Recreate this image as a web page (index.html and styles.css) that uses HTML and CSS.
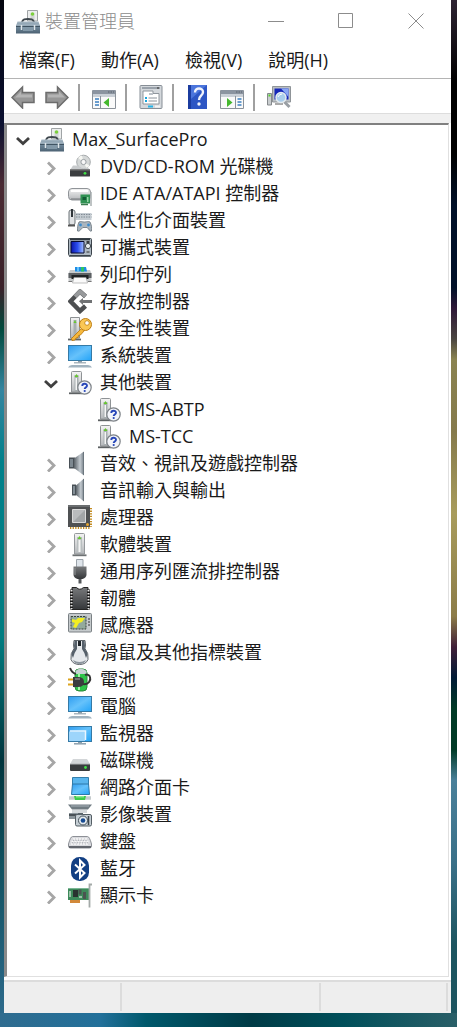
FILE: index.html
```html
<!DOCTYPE html>
<html lang="zh-Hant">
<head>
    <meta charset="UTF-8">
    <meta name="viewport" content="width=device-width, initial-scale=1.0">
    <title>裝置管理員</title>
    <link rel="stylesheet" href="styles.css">
</head>
<body>
    <!-- Icon definitions -->
    <svg class="defs" aria-hidden="true">
        <defs>
            <linearGradient id="blue" x1="0" y1="0" x2="1" y2="1">
                <stop offset="0" stop-color="#2f9df0"/><stop offset=".5" stop-color="#66c2fb"/><stop offset="1" stop-color="#22a3f8"/>
            </linearGradient>
            <linearGradient id="silver" x1="0" y1="0" x2="0" y2="1">
                <stop offset="0" stop-color="#f4f4f4"/><stop offset="1" stop-color="#b4b7ba"/>
            </linearGradient>
            <linearGradient id="steel" x1="0" y1="0" x2="0" y2="1">
                <stop offset="0" stop-color="#a9bac6"/><stop offset=".45" stop-color="#70889a"/><stop offset="1" stop-color="#4c6273"/>
            </linearGradient>
            <linearGradient id="cone" x1="0" y1="0" x2="1" y2="0">
                <stop offset="0" stop-color="#5a6268"/><stop offset=".6" stop-color="#c3cad0"/><stop offset="1" stop-color="#747e86"/>
            </linearGradient>
            <linearGradient id="dark" x1="0" y1="0" x2="0" y2="1">
                <stop offset="0" stop-color="#77797b"/><stop offset="1" stop-color="#35373a"/>
            </linearGradient>
            <linearGradient id="lcd" x1="0" y1="0" x2="1" y2="0">
                <stop offset="0" stop-color="#0a14a8"/><stop offset=".5" stop-color="#2d50f0"/><stop offset="1" stop-color="#a8c4ff"/>
            </linearGradient>
        </defs>

        <symbol id="i-toolbox" viewBox="0 0 24 25">
            <path d="M11.500 12V1.500h10V12z" fill="#eceeee" stroke="#a0a4a6"/>
            <path d="M14.500 4.500h4v7h-4z" fill="#cfd4d2"/><circle cx="16.500" cy="5" r="1.800" fill="#7bd03c"/>
            <path d="M6 13c1-3 3-3 6-3s5 0 6 3" fill="none" stroke="#3e474d" stroke-width="2"/>
            <path d="M1.500 12.500h21L24 17v7.500H0V17z" fill="url(#steel)"/>
            <path d="M0 17.500h24" stroke="#3f5362"/><path d="M1 16h22" stroke="#b9c8d3" stroke-width=".8"/>
            <path d="M5.500 16v5M18.500 16v5" stroke="#dfe6ea" stroke-width="1.500"/><path d="M7 18h10v4H7z" fill="#8298a8"/>
        </symbol>
        <symbol id="i-dvd" viewBox="0 0 24 25">
            <circle cx="15.500" cy="8" r="6.800" fill="#d5d8d8" stroke="#a6aaac"/>
            <path d="M15.500 8L10 4a6.500 6.500 0 0 1 4-2.500zM15.500 8l6 3.500a6.500 6.500 0 0 1-3 2.700z" fill="#f5f6f2"/>
            <circle cx="15.500" cy="8" r="2.600" fill="#f7f7f7" stroke="#9ba0a4"/>
            <path d="M5 11.500h5c3 4 8 3 9.500 1.500l2.500 3H2z" fill="#c8cbcd"/>
            <path d="M2 15.500h20v6.500q0 .5-1 .5H3q-1 0-1-.5z" fill="#3b3e40"/><path d="M2 16h20" stroke="#777"/><circle cx="17" cy="19.300" r="1.400" fill="#3ee044"/>
        </symbol>
        <symbol id="i-ide" viewBox="0 0 24 25">
            <rect x=".5" y="7.500" width="22" height="11.500" rx="3.500" fill="url(#silver)" stroke="#909498"/>
            <path d="M3 10h17" stroke="#fff" stroke-width="2"/><path d="M3 18h10" stroke="#74787c"/>
            <path d="M12.500 13.500h9.500v9h-9.500z" fill="#2f9152"/><path d="M23 11v14" stroke="#a8afb0" stroke-width="1.500"/>
            <path d="M14.500 16h3.500v3h-3.500z" fill="#145c36"/><path d="M13 23.500h7" stroke="#3b7d4f" stroke-width="1.500"/><path d="M19 16h1.500v5H19z" fill="#93d4a4"/>
        </symbol>
        <symbol id="i-hid" viewBox="0 0 24 25">
            <rect x="1" y="2" width="6" height="15" rx="2" fill="#e0e2e4" stroke="#6b7277"/>
            <path d="M4 1v8" stroke="#30363a" stroke-width="2"/><path d="M0 17.500h7" stroke="#555" stroke-width="2"/>
            <path d="M8 5h15.500v7H8z" fill="#c5ccd2"/><path d="M8 6.500h15.500M8 9h15.500" stroke="#818b94" stroke-width="1.200" stroke-dasharray="1.500 1"/>
            <path d="M11 14c2-1 3 0 5.500 0s3.500-1 5.500 0c1.500 3 2 6 1.500 9-2 1-3-3-4.500-3.500h-4C13.500 20 12 24 9.500 23c0-3 0-6 1.500-9z" fill="#aab5be" stroke="#66717a" stroke-width=".8"/>
            <circle cx="12.500" cy="17" r="1.400" fill="#3a8cd0"/><circle cx="20.500" cy="17" r="1.400" fill="#3a8cd0"/>
        </symbol>
        <symbol id="i-portable" viewBox="0 0 24 25">
            <rect x=".500" y="3.500" width="23" height="17" rx="1" fill="#aeb9c2" stroke="#3c444b"/>
            <path d="M2 4.500h20" stroke="#303840" stroke-width="1.500"/>
            <path d="M3 6.500h13v11.500H3z" fill="url(#lcd)" stroke="#070b30"/>
            <circle cx="20" cy="11" r="2.600" fill="#e8edf0" stroke="#3c444b"/><path d="M18.500 7h3" stroke="#111" stroke-width="1.500"/><path d="M18.500 17h3" stroke="#333"/>
            <path d="M1 21.500h22" stroke="#6b747b"/>
        </symbol>
        <symbol id="i-printer" viewBox="0 0 24 25">
            <path d="M2 8h20l1.500 3.500V20H.5v-8.500z" fill="#c7cacc"/><path d="M7 9.500V5h11l1 4.500z" fill="#1e8ce6"/><path d="M13 5h3v4.500h-3z" fill="#2fc463"/><path d="M9 5h2v4.500H9z" fill="#66c2f8"/>
            <path d="M.5 11h23v5H.5z" fill="#5d6164"/>
            <path d="M3.500 17v-4h17v4z" fill="#202325"/><path d="M6 15.500h12l1.500 5.500h-15z" fill="#fafafa" stroke="#999" stroke-width=".6"/>
            <path d="M.5 19.500h3.500M20 19.500h3.500" stroke="#777"/>
        </symbol>
        <symbol id="i-storage" viewBox="0 0 24 25">
            <path d="M17.500 7.500L12 2.500 2.500 12.300 12 22l5.500-5" fill="none" stroke="#4d4f51" stroke-width="4.500"/>
            <path d="M17.500 7.500L12 2.500 7 7.700" fill="none" stroke="#97999b" stroke-width="4"/>
            <path d="M11 12.300l4-3.300v2h9v3h-9v2z" fill="#707274"/>
        </symbol>
        <symbol id="i-tower" viewBox="0 0 24 25">
            <path d="M6.500 2.500q0-1 1-1h8q1 0 1 1V22h-10z" fill="url(#silver)" stroke="#94989b"/>
            <path d="M9 5h5v15H9z" fill="#b9bfc0"/><path d="M10.500 8h2v12h-2z" fill="#f5f5f5"/><path d="M9.500 7l2-3 2 3z" fill="#66c82c"/>
            <path d="M4.500 23.300h14" stroke="#6d7173" stroke-width="1.800"/>
        </symbol>
        <symbol id="i-security" viewBox="0 0 24 25">
            <path d="M2.500 1.500h9V22h-9z" fill="url(#silver)" stroke="#8e9295"/><path d="M5.500 4h3v16h-3z" fill="#a7aeb0"/><path d="M5.500 7L7 4l1.500 3z" fill="#66c82c"/>
            <path d="M0 23.500h13" stroke="#606466" stroke-width="1.800"/>
            <path d="M14 12L3.500 22.500l.5 2 3-.5 1-2 2-.5.5-2 2-.5 4-4.500z" fill="#f6b83d" stroke="#b97408" stroke-width=".8"/>
            <circle cx="17.500" cy="8.500" r="6" fill="#fac755" stroke="#bd7c12"/><circle cx="19" cy="7" r="2.300" fill="#fff" stroke="#bd7c12" stroke-width=".8"/>
        </symbol>
        <symbol id="i-pc" viewBox="0 0 24 25">
            <rect x=".5" y="2.500" width="23" height="15" fill="url(#blue)" stroke="#357aa6"/>
            <path d="M10 18h4v1.500h-4z" fill="#8c9da9"/><path d="M6 19.800h12" stroke="#96a5af" stroke-width="1.200"/>
            <path d="M0 24.500q1-2.500 4-2.500h16q3 0 4 2.500z" fill="#a2b3bf"/>
        </symbol>
        <symbol id="i-unknown" viewBox="0 0 24 25">
            <path d="M3.500 2.500q0-1 1-1h8q1 0 1 1V22h-10z" fill="url(#silver)" stroke="#8e9295"/>
            <path d="M6.500 5h4v16h-4z" fill="#a7aeb0"/><path d="M7.500 8H9v12H7.500z" fill="#f5f5f5"/><path d="M6.500 7l2-3 2 3z" fill="#66c82c"/>
            <path d="M1 23.300h13" stroke="#5d6163" stroke-width="1.800"/>
            <circle cx="16.500" cy="17.500" r="6.700" fill="#f2f4f9" stroke="#7d8287" stroke-width="1.200"/>
            <path d="M14.300 16c0-3 4.700-3 4.700-.3 0 1.800-2.300 1.500-2.300 3.300" fill="none" stroke="#2746b8" stroke-width="1.900"/><circle cx="16.700" cy="21" r="1.100" fill="#2746b8"/>
        </symbol>
        <symbol id="i-sound" viewBox="0 0 24 25">
            <path d="M1 6.500h6v11H1z" fill="#485056"/><path d="M2 8h3v8H2z" fill="#7d8890"/>
            <path d="M6 7.500L16 .5v24L6 17z" fill="url(#cone)"/><path d="M15.500 1v23" stroke="#6b767e"/>
        </symbol>
        <symbol id="i-audio" viewBox="0 0 24 25">
            <path d="M4 6.500h4v11H4z" fill="#485056"/><path d="M5 8h2v8H5z" fill="#828d95"/>
            <path d="M8 7.500L16 .5v23L8 17z" fill="url(#cone)"/><path d="M15.500 1v22" stroke="#6b767e"/>
        </symbol>
        <symbol id="i-cpu" viewBox="0 0 24 25">
            <path d="M2 23h20M23 3v19" stroke="#c28b20" stroke-width="2" stroke-dasharray="1.300 1.300"/>
            <path d="M0 0h22v22H0z" fill="#4f5153"/><path d="M0 0h22v2H0z" fill="#6b6e70"/>
            <path d="M4.500 4.500h13v13h-13z" fill="#b9bbbd" stroke="#dadada"/><path d="M5 17L17 5v12z" fill="#a2a5a7"/><circle cx="19.500" cy="19.500" r="1.500" fill="#e9a52c"/>
        </symbol>
        <symbol id="i-usb" viewBox="0 0 24 25">
            <path d="M8.500.5h6.500v8H8.500z" fill="#dfe5eb" stroke="#9ba3aa"/>
            <path d="M5.500 7.500h13v8q0 3-4 4.500h-5q-4-1.500-4-4.500z" fill="url(#dark)"/><path d="M10.500 20h3v4.500h-3z" fill="#55585b"/>
            <path d="M7 9v7" stroke="#909396"/>
        </symbol>
        <symbol id="i-firmware" viewBox="0 0 24 25">
            <path d="M4 1.500h4.500q3 3.500 7 0H20v22H4z" fill="url(#dark)" stroke="#252525"/>
            <path d="M3.500 3.500v20M20.500 3.500v20" stroke="#1a1a1a" stroke-width="3"/>
            <path d="M3.500 4v19M20.500 4v19" stroke="#e6e6e6" stroke-width="2" stroke-dasharray="1.500 1.500"/>
        </symbol>
        <symbol id="i-sensor" viewBox="0 0 24 25">
            <rect x=".500" y=".500" width="23" height="18.500" rx="1" fill="#c5cacc" stroke="#7a8084"/>
            <path d="M3 3.500h15v12.500H3z" fill="#93aa9c" stroke="#39433e" stroke-dasharray="2 1"/>
            <path d="M4 6l4 1 2-2h7l-3 4-3 1-3 5-3-1 2-4-3-1z" fill="#f3ee20"/><path d="M20 6h2M20 9h2M20 12h2" stroke="#333"/>
        </symbol>
        <symbol id="i-mouse" viewBox="0 0 24 25">
            <path d="M6 .5h11q1 5 0 8 4 5 3 11-2 5-8.500 5T3 19.500q-1-6 3-11-1-3 0-8z" fill="#e6e9ec" stroke="#60666b"/>
            <path d="M6.500 1h2.500v8q-3 4-4 9-2-3-1-6 3-3 2-6zM16.500 1H14v8q3 4 4 9 2-3 1-6-3-3-2-6z" fill="#56606a"/>
            <path d="M10 1h3v5h-3z" fill="#20252a"/><path d="M5 20q6.500 4 13 0-1.500 4-6.500 4T5 20z" fill="#8c959d"/>
        </symbol>
        <symbol id="i-battery" viewBox="0 0 24 25">
            <rect x="7" y="2" width="12" height="22" rx="4" fill="#2fc44a" stroke="#2a8a3a"/><path d="M7.500 4q5-4.500 11 0v3h-11z" fill="#c9d2d6"/>
            <path d="M11 6v17" stroke="#a5f0a8" stroke-width="2"/>
            <path d="M2 1q2 5 6 6M15 17c6 1 8-4 7-7-.5-2-3-3-5-2" fill="none" stroke="#333" stroke-width="2"/>
            <path d="M5 10h5q6 0 6 5t-6 5H5z" fill="#3a3c3e"/><path d="M7 12h5" stroke="#aaa"/><path d="M0 12.500h5M0 17.500h5" stroke="#dca41d" stroke-width="2"/>
        </symbol>
        <symbol id="i-monitor" viewBox="0 0 24 25">
            <rect x=".500" y="5.500" width="23" height="15" fill="url(#blue)" stroke="#357aa6"/>
            <path d="M1 10.500h16V20H1z" fill="#9dd5fb"/><path d="M2 10h15.500v9" fill="none" stroke="#eaf6ff" stroke-width="1.500"/>
            <path d="M6 22.800h12" stroke="#8da0ad" stroke-width="1.500"/><path d="M10 21h4v1h-4z" fill="#8da0ad"/>
        </symbol>
        <symbol id="i-disk" viewBox="0 0 24 25">
            <path d="M5 11h14l3 5H2z" fill="#d3d6d8"/><path d="M2 16h20v6q0 1-1 1H3q-1 0-1-1z" fill="#393c3e"/><path d="M2 16.300h20" stroke="#85888a"/><circle cx="17.500" cy="19.500" r="1.400" fill="#40e244"/>
        </symbol>
        <symbol id="i-network" viewBox="0 0 24 25">
            <path d="M4.500 2.500h16v7h-16z" fill="#59b5ed" stroke="#337eab"/>
            <path d="M4.500 9h16l1 10.500h-18z" fill="url(#blue)" stroke="#2e79a9"/>
            <path d="M1 23h22" stroke="#c6cbcd" stroke-width="3.500"/><path d="M6 21h12l-1 4H7z" fill="#3dcb4c"/><path d="M8 21h8v1.500H8z" fill="#8be68f"/>
        </symbol>
        <symbol id="i-imaging" viewBox="0 0 24 25">
            <path d="M0 2.500h24l-4 5H4z" fill="#707b82"/><path d="M3 4h18" stroke="#a6b1b7"/><path d="M4 8h15v3H4z" fill="#d4d9dc"/>
            <path d="M1 11h10v6H1z" fill="#8b959b"/><path d="M1 13h8" stroke="#333b40" stroke-width="1.500"/>
            <rect x="7.500" y="12.500" width="16" height="11.500" rx="1.500" fill="#c4cdd3" stroke="#545e65"/><path d="M10 11h5v2h-5z" fill="#59646b"/>
            <circle cx="15" cy="18.500" r="4.500" fill="#e5ebef" stroke="#46535c"/><circle cx="15" cy="18.500" r="2.300" fill="#164a91"/><path d="M20.500 14v9" stroke="#3d464c" stroke-width="1.500"/>
        </symbol>
        <symbol id="i-keyboard" viewBox="0 0 24 25">
            <path d="M4.500 7.500h15q2 0 4 7.500v2q0 2-2 2h-19q-2 0-2-2v-2q2-7.500 4-7.500z" fill="#d9dade" stroke="#8d9096"/>
            <path d="M5 10h14M3.500 12.500h17M3 15h18" stroke="#f8f8f8" stroke-width="1.600" stroke-dasharray="2 1"/><path d="M1 18h22" stroke="#62666d" stroke-width="2"/>
            <path d="M5 11.300h14M4 13.800h16" stroke="#909399" stroke-width=".7" stroke-dasharray="1 1.500"/>
        </symbol>
        <symbol id="i-bluetooth" viewBox="0 0 24 25">
            <rect x="3" y="1" width="18" height="24" rx="8.500" fill="#123f83"/>
            <path d="M7 8.500l9.500 8.500-4.500 4.500v-17L16.500 9 7 17.500" fill="none" stroke="#fff" stroke-width="2"/>
        </symbol>
        <symbol id="i-display" viewBox="0 0 24 25">
            <path d="M0 5h21v12H0z" fill="#3d8a5a"/><path d="M0 5.500h21" stroke="#7cb795"/>
            <path d="M5 7h5v7H5z" fill="#293330"/><path d="M10.500 6.500h3v5h-3zM15 9h3v7h-3z" fill="#4b5451"/><path d="M2 8v6M11 14h3" stroke="#bcd4c3" stroke-width="1.500"/>
            <path d="M2 18.500h10" stroke="#d2893a" stroke-width="3"/><path d="M24 1.500h-2.500V24.500" fill="none" stroke="#a4aaa8" stroke-width="1.800"/>
        </symbol>

        <symbol id="t-back" viewBox="0 0 24 24">
            <path d="M1 12.500L11.500 2v5.500H23v10H11.500V23z" fill="#979797" stroke="#6c6c6c" stroke-width="1.500"/><path d="M4 12.500l6-6v3h11v3z" fill="#b4b4b4"/>
        </symbol>
        <symbol id="t-forward" viewBox="0 0 24 24">
            <path d="M23 12.500L12.500 2v5.500H1v10h11.500V23z" fill="#979797" stroke="#6c6c6c" stroke-width="1.500"/><path d="M20 12.500l-6-6v3H3v3z" fill="#b4b4b4"/>
        </symbol>
        <symbol id="t-tree" viewBox="0 0 24 24">
            <path d="M.5 5.500h23v18H.5z" fill="#fafafa" stroke="#8b929a"/><path d="M1 5h22v4H1z" fill="#8b94a0"/><path d="M1 9h22v3H1z" fill="#c9cfd6"/><path d="M16 7h6" stroke="#59616b" stroke-dasharray="1.500 1"/>
            <path d="M8.500 11v12" stroke="#8b929a"/><path d="M3 14h4M3 17h4M3 20h4" stroke="#3b7fc0" stroke-width="1.500"/>
            <path d="M17 13v9l-5.500-4.500z" fill="#45b82e"/>
        </symbol>
        <symbol id="t-properties" viewBox="0 0 24 24">
            <rect x="1" y=".5" width="22" height="23" rx="1" fill="#d4d8dc" stroke="#878e96"/><path d="M3 3h18" stroke="#9aa2ab" stroke-width="2"/><path d="M18 3h2" stroke="#555" stroke-width="1.500"/>
            <path d="M4 8.500V19h16V8.500h-6V6H4z" fill="#fff" stroke="#8f969d"/><path d="M10 8h4v2h-4z" fill="#bcc2c8"/>
            <path d="M6 13h2M6 16h2" stroke="#18a5dd" stroke-width="2"/><path d="M9.500 13H18M9.500 16H18" stroke="#8b929a"/>
            <path d="M9 21.500h5" stroke="#24b4e8" stroke-width="2"/><path d="M16 21.500h5" stroke="#f5f5f5" stroke-width="2"/>
        </symbol>
        <symbol id="t-help" viewBox="0 0 24 24">
            <path d="M2 0h19v24H2z" fill="#2d56c4"/><path d="M2 0h3v24H2z" fill="#1b3c9f"/><path d="M5 0h16L5 14z" fill="#4b75dc"/>
            <path d="M9 7.500c0-5.500 8-5 8-.5 0 4-4 3.500-4 8" fill="none" stroke="#f1f4fc" stroke-width="2.400"/><circle cx="13" cy="19" r="1.700" fill="#f1f4fc"/>
        </symbol>
        <symbol id="t-action" viewBox="0 0 24 24">
            <path d="M.5 5.500h23v18H.5z" fill="#fafafa" stroke="#8b929a"/><path d="M1 5h22v4H1z" fill="#8b94a0"/><path d="M1 9h22v3H1z" fill="#c9cfd6"/><path d="M16 7h6" stroke="#59616b" stroke-dasharray="1.500 1"/>
            <path d="M15.500 11v12" stroke="#8b929a"/><path d="M17.500 14h4M17.500 17h4M17.500 20h4" stroke="#3b7fc0" stroke-width="1.500"/>
            <path d="M7 13v9l5.500-4.500z" fill="#45b82e"/>
        </symbol>
        <symbol id="t-scan" viewBox="0 0 24 24">
            <path d="M5.500 1.500h18V17h-18z" fill="#b9bec2" stroke="#8f9498"/><path d="M7.500 3.500h14v11h-14z" fill="#1527b8"/><path d="M14 3.500h7.500V12z" fill="#88a6f5"/>
            <path d="M.5 8.500h4V20h-4z" fill="#c9cdcf" stroke="#85898c"/><path d="M1.500 10.500h2" stroke="#52d22a" stroke-width="2"/><path d="M8 19h8" stroke="#aaa" stroke-width="2"/>
            <path d="M17.500 17l5 5" stroke="#999fa4" stroke-width="3"/><circle cx="14" cy="12.500" r="5" fill="#a9cdec" stroke="#e3ebf0" stroke-width="1.500"/><path d="M11 12q1-3 4-3" fill="none" stroke="#fff"/>
        </symbol>
        <symbol id="chevron" viewBox="0 0 14 14"><path d="M4 1.500L10 7.500l-6 6" fill="none" stroke="currentColor" stroke-width="2.800"/></symbol>
        <symbol id="chevron-open" viewBox="0 0 14 14"><path d="M1 4l6 5.500L13 4" fill="none" stroke="currentColor" stroke-width="2.800"/></symbol>
    </svg>

    <main class="window">
        <!-- Title bar -->
        <header class="titlebar">
            <svg class="icon"><use href="#i-toolbox"/></svg>
            <h1>裝置管理員</h1>
            <div class="window-buttons">
                <button type="button" aria-label="最小化"><svg viewBox="0 0 16 16"><path d="M0 8.500h16"/></svg></button>
                <button type="button" aria-label="最大化"><svg viewBox="0 0 16 16"><path d="M.5.5h14v14H.5z"/></svg></button>
                <button type="button" aria-label="關閉"><svg viewBox="0 0 16 16"><path d="M.5.5l15 15M15.500.5L.5 15.500"/></svg></button>
            </div>
        </header>

        <!-- Menu -->
        <nav class="menu">
            <button type="button">檔案(F)</button>
            <button type="button">動作(A)</button>
            <button type="button">檢視(V)</button>
            <button type="button">說明(H)</button>
        </nav>

        <!-- Toolbar -->
        <div class="toolbar">
            <div class="tools">
                <button type="button" aria-label="上一頁"><svg><use href="#t-back"/></svg></button>
                <button type="button" aria-label="下一頁"><svg><use href="#t-forward"/></svg></button>
            </div>
            <div class="tools">
                <button type="button" aria-label="顯示/隱藏主控台樹狀目錄"><svg><use href="#t-tree"/></svg></button>
            </div>
            <div class="tools">
                <button type="button" aria-label="內容"><svg><use href="#t-properties"/></svg></button>
            </div>
            <div class="tools">
                <button type="button" aria-label="說明"><svg><use href="#t-help"/></svg></button>
                <button type="button" aria-label="顯示/隱藏執行窗格"><svg><use href="#t-action"/></svg></button>
            </div>
            <div class="tools">
                <button type="button" aria-label="掃描硬體變更"><svg><use href="#t-scan"/></svg></button>
            </div>
        </div>

        <!-- Device tree -->
        <section class="tree">
            <ul>
                <li>
                    <div class="row"><button type="button" class="expander open" aria-label="摺疊"><svg><use href="#chevron-open"/></svg></button><svg class="icon"><use href="#i-toolbox"/></svg><span>Max_SurfacePro</span></div>
                    <ul>
                        <li class="row"><button type="button" class="expander" aria-label="展開"><svg><use href="#chevron"/></svg></button><svg class="icon"><use href="#i-dvd"/></svg><span>DVD/CD-ROM 光碟機</span></li>
                        <li class="row"><button type="button" class="expander" aria-label="展開"><svg><use href="#chevron"/></svg></button><svg class="icon"><use href="#i-ide"/></svg><span>IDE ATA/ATAPI 控制器</span></li>
                        <li class="row"><button type="button" class="expander" aria-label="展開"><svg><use href="#chevron"/></svg></button><svg class="icon"><use href="#i-hid"/></svg><span>人性化介面裝置</span></li>
                        <li class="row"><button type="button" class="expander" aria-label="展開"><svg><use href="#chevron"/></svg></button><svg class="icon"><use href="#i-portable"/></svg><span>可攜式裝置</span></li>
                        <li class="row"><button type="button" class="expander" aria-label="展開"><svg><use href="#chevron"/></svg></button><svg class="icon"><use href="#i-printer"/></svg><span>列印佇列</span></li>
                        <li class="row"><button type="button" class="expander" aria-label="展開"><svg><use href="#chevron"/></svg></button><svg class="icon"><use href="#i-storage"/></svg><span>存放控制器</span></li>
                        <li class="row"><button type="button" class="expander" aria-label="展開"><svg><use href="#chevron"/></svg></button><svg class="icon"><use href="#i-security"/></svg><span>安全性裝置</span></li>
                        <li class="row"><button type="button" class="expander" aria-label="展開"><svg><use href="#chevron"/></svg></button><svg class="icon"><use href="#i-pc"/></svg><span>系統裝置</span></li>
                        <li>
                            <div class="row"><button type="button" class="expander open" aria-label="摺疊"><svg><use href="#chevron-open"/></svg></button><svg class="icon"><use href="#i-unknown"/></svg><span>其他裝置</span></div>
                            <ul class="leaves">
                                <li class="row"><svg class="icon"><use href="#i-unknown"/></svg><span>MS-ABTP</span></li>
                                <li class="row"><svg class="icon"><use href="#i-unknown"/></svg><span>MS-TCC</span></li>
                            </ul>
                        </li>
                        <li class="row"><button type="button" class="expander" aria-label="展開"><svg><use href="#chevron"/></svg></button><svg class="icon"><use href="#i-sound"/></svg><span>音效、視訊及遊戲控制器</span></li>
                        <li class="row"><button type="button" class="expander" aria-label="展開"><svg><use href="#chevron"/></svg></button><svg class="icon"><use href="#i-audio"/></svg><span>音訊輸入與輸出</span></li>
                        <li class="row"><button type="button" class="expander" aria-label="展開"><svg><use href="#chevron"/></svg></button><svg class="icon"><use href="#i-cpu"/></svg><span>處理器</span></li>
                        <li class="row"><button type="button" class="expander" aria-label="展開"><svg><use href="#chevron"/></svg></button><svg class="icon"><use href="#i-tower"/></svg><span>軟體裝置</span></li>
                        <li class="row"><button type="button" class="expander" aria-label="展開"><svg><use href="#chevron"/></svg></button><svg class="icon"><use href="#i-usb"/></svg><span>通用序列匯流排控制器</span></li>
                        <li class="row"><button type="button" class="expander" aria-label="展開"><svg><use href="#chevron"/></svg></button><svg class="icon"><use href="#i-firmware"/></svg><span>韌體</span></li>
                        <li class="row"><button type="button" class="expander" aria-label="展開"><svg><use href="#chevron"/></svg></button><svg class="icon"><use href="#i-sensor"/></svg><span>感應器</span></li>
                        <li class="row"><button type="button" class="expander" aria-label="展開"><svg><use href="#chevron"/></svg></button><svg class="icon"><use href="#i-mouse"/></svg><span>滑鼠及其他指標裝置</span></li>
                        <li class="row"><button type="button" class="expander" aria-label="展開"><svg><use href="#chevron"/></svg></button><svg class="icon"><use href="#i-battery"/></svg><span>電池</span></li>
                        <li class="row"><button type="button" class="expander" aria-label="展開"><svg><use href="#chevron"/></svg></button><svg class="icon"><use href="#i-pc"/></svg><span>電腦</span></li>
                        <li class="row"><button type="button" class="expander" aria-label="展開"><svg><use href="#chevron"/></svg></button><svg class="icon"><use href="#i-monitor"/></svg><span>監視器</span></li>
                        <li class="row"><button type="button" class="expander" aria-label="展開"><svg><use href="#chevron"/></svg></button><svg class="icon"><use href="#i-disk"/></svg><span>磁碟機</span></li>
                        <li class="row"><button type="button" class="expander" aria-label="展開"><svg><use href="#chevron"/></svg></button><svg class="icon"><use href="#i-network"/></svg><span>網路介面卡</span></li>
                        <li class="row"><button type="button" class="expander" aria-label="展開"><svg><use href="#chevron"/></svg></button><svg class="icon"><use href="#i-imaging"/></svg><span>影像裝置</span></li>
                        <li class="row"><button type="button" class="expander" aria-label="展開"><svg><use href="#chevron"/></svg></button><svg class="icon"><use href="#i-keyboard"/></svg><span>鍵盤</span></li>
                        <li class="row"><button type="button" class="expander" aria-label="展開"><svg><use href="#chevron"/></svg></button><svg class="icon"><use href="#i-bluetooth"/></svg><span>藍牙</span></li>
                        <li class="row"><button type="button" class="expander" aria-label="展開"><svg><use href="#chevron"/></svg></button><svg class="icon"><use href="#i-display"/></svg><span>顯示卡</span></li>
                    </ul>
                </li>
            </ul>
        </section>

        <!-- Status bar -->
        <footer class="statusbar">
            <div></div>
            <div></div>
            <div></div>
        </footer>
    </main>
</body>
</html>
```

FILE: styles.css
```css
* {
    box-sizing: border-box;
    margin: 0;
    padding: 0;
}

body {
    font-family: 'Open Sans', 'Noto Sans CJK TC', sans-serif;
    font-size: 18px;
    line-height: 27px;
    color: #1a1a1a;
    min-height: 100vh;
    padding: 0 6px 14px 4px;
    display: flex;
    flex-direction: column;
    /* desktop wallpaper: bottom edge, left edge, right edge */
    background:
        linear-gradient(90deg, #2f6c8f, #22709a 22%, #00586b 32%, #003b46 55%, #004f5a 75%, #2a5f68) bottom / 100% 14px no-repeat,
        linear-gradient(#05060f, #0a1030 12%, #4a2a33 18%, #3a2028 28%, #00493c 32%, #3585a0 38%, #00808a 45%, #007c80 62%, #00343c 74%, #10505e 84%, #2f6c8f) left / 50% 100% no-repeat,
        linear-gradient(#2e2433, #000 8%, #000 15%, #001028 20%, #001028 28%, #2e1838 30%, #4a4540 33%, #8a8350 35%, #857a4c 42%, #a89c5c 50%, #8c7c48 60%, #401f38 63%, #001a35 66%, #003a26 69%, #003a26 73%, #4a809a 76%, #3a7088 84%, #1d5560 92%, #1d5560) right / 50% 100% no-repeat;
}

ul {
    list-style: none;
}

button {
    border: 0;
    background: none;
    font: inherit;
    color: inherit;
}

svg {
    display: block;
    flex: none;
}

.defs {
    position: absolute;
    width: 0;
    height: 0;
}

.icon {
    width: 24px;
    height: 25px;
}

.window {
    flex: 1;
    display: flex;
    flex-direction: column;
    background: #fff;
}

/* Title bar */
.titlebar {
    display: flex;
    align-items: center;
    height: 42px;
    padding-left: 12px;
}

.titlebar h1 {
    margin-left: 5px;
    font-size: 18px;
    font-weight: 300;
    color: #8c8c8c;
}

.window-buttons {
    display: flex;
    margin-left: auto;
}

.window-buttons button {
    width: 70px;
    height: 42px;
    display: flex;
    align-items: center;
    justify-content: center;
}

.window-buttons svg {
    width: 16px;
    height: 16px;
    fill: none;
    stroke: #8c8c8c;
}

/* Menu */
.menu {
    display: flex;
    gap: 26px;
    height: 37px;
    padding: 5px 15px;
    border-bottom: 1px solid #b4b4b4;
}

/* Toolbar */
.toolbar {
    display: flex;
    align-items: center;
    height: 44px;
    padding: 0 8px 8px 0;
    background: linear-gradient(#fff 34px, #ddd 34px, #ddd 35px, #f0f0f0 35px);
}

.tools {
    display: flex;
    gap: 10px;
    padding: 0 9px 0 12px;
    height: 27px;
    align-items: center;
    border-right: 2px solid #a0a0a0;
}

.tools:first-child {
    padding-left: 7px;
}

.tools:last-child {
    border-right: 0;
}

.tools svg {
    width: 24px;
    height: 24px;
}

/* Device tree */
.tree {
    flex: 1;
    margin: 0 2px 3px 0;
    padding-top: 1px;
    border-style: solid;
    border-width: 2px 1px 1px 3px;
    border-color: #808080 #e0e0e0 #e0e0e0 #8a8a8a;
}

.row {
    display: flex;
    align-items: center;
    height: 27px;
    padding-left: 1px;
    white-space: nowrap;
}

.row span {
    margin-left: 8px;
}

.tree ul ul {
    padding-left: 28px;
}

.tree ul .leaves {
    padding-left: 61px;
}

.expander {
    width: 32px;
    height: 27px;
    padding: 2px 2px 0 0;
    display: flex;
    align-items: center;
    justify-content: center;
    color: #a6a6a6;
}

.expander.open {
    color: #404040;
}

.expander svg {
    width: 14px;
    height: 14px;
}

/* Status bar */
.statusbar {
    display: grid;
    grid-template-columns: 26fr 44fr 28fr;
    height: 33px;
    padding: 1px 3px 2px 0;
    background: #eee;
    border-top: 2px solid #dcdcdc;
}

.statusbar div {
    border-right: 2px solid #dcdcdc;
}
```
